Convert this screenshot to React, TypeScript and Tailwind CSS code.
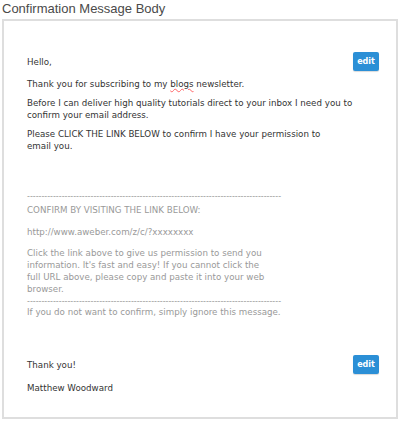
import React from 'react';

function EditButton() {
	return (
		<button className="w-[26px] h-[19px] rounded-[2px] bg-[#2b8fd6] text-white text-[8px] font-bold leading-none shadow-[0_1px_1px_rgba(0,0,0,0.15)] font-['DejaVu_Sans',sans-serif]">
			edit
		</button>
	);
}

const dashes = '-'.repeat(88);

function Dashes({ className }: { className?: string }) {
	return <p className={`whitespace-nowrap leading-[8px] text-[8px] ${className ?? ''}`}>{dashes}</p>;
}

export default function App() {
	return (
		<div className="w-[400px] h-[426px] bg-white pt-[2px] font-['DejaVu_Sans',Verdana,sans-serif] text-[8.7px] leading-[12px]">
			<h1 className="px-[2px] text-[13px] leading-[14px] text-[#4a4a4a] font-['Liberation_Sans',Arial,sans-serif]">
				Confirmation Message Body
			</h1>
			<div className="mx-[2px] mt-[3px] h-[400px] border-2 border-[#dedede] pl-[23px] pr-[17px] pt-[31px] text-[#333]">
				<div className="flex items-center justify-between">
					<p>Hello,</p>
					<EditButton />
				</div>
				<p className="mt-[7px]">
					Thank you for subscribing to my <span className="underline decoration-wavy decoration-red-400">blogs</span> newsletter.
				</p>
				<p className="mt-[7px] pr-[6px]">
					Before I can deliver high quality tutorials direct to your inbox I need you to confirm your email address.
				</p>
				<p className="mt-[7px] w-[302px]">
					Please CLICK THE LINK BELOW to confirm I have your permission to email you.
				</p>
				<div className="mt-[41px] text-[#999]">
					<Dashes />
					<p className="mt-[3px]">CONFIRM BY VISITING THE LINK BELOW:</p>
					<p className="mt-[10px]">http://www.aweber.com/z/c/?xxxxxxxx</p>
					<p className="mt-[9px] whitespace-nowrap">
						Click the link above to give us permission to send you
						<br />
						information. It's fast and easy! If you cannot click the
						<br />
						full URL above, please copy and paste it into your web
						<br />
						browser.
					</p>
					<Dashes className="mt-[3px]" />
					<p className="whitespace-nowrap">If you do not want to confirm, simply ignore this message.</p>
				</div>
				<div className="mt-[37px] flex items-center justify-between">
					<p>Thank you!</p>
					<EditButton />
				</div>
				<p className="mt-[8px]">Matthew Woodward</p>
			</div>
		</div>
	);
}
